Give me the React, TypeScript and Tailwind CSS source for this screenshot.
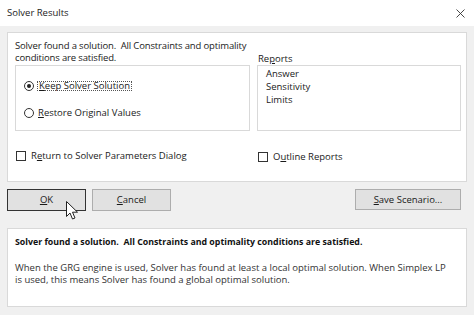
import React from "react";

const font = { fontFamily: '"Open Sans", "Noto Sans", sans-serif' };

function Radio({ checked }: { checked?: boolean }) {
  return (
    <span className="w-[10px] h-[10px] rounded-full border border-[#333] bg-white flex items-center justify-center shrink-0">
      {checked && <span className="w-[4px] h-[4px] rounded-full bg-[#222]" />}
    </span>
  );
}

function Check() {
  return <span className="w-[10px] h-[10px] border border-[#333] bg-white shrink-0" />;
}

export default function App() {
  return (
    <div
      className="w-[474px] h-[315px] bg-[#f0f0f0] overflow-hidden text-[9.5px] leading-[12px] text-[#1a1a1a] relative"
      style={font}
    >
      {/* Title bar */}
      <div className="h-[26px] bg-white flex items-center justify-between pl-[7px] pr-[8px]">
        <span className="text-[9.5px] text-[#222]">Solver Results</span>
        <svg width="9" height="9" viewBox="0 0 9 9" className="mr-[1px]">
          <path d="M0.5 0.5 L8.5 8.5 M8.5 0.5 L0.5 8.5" stroke="#333" strokeWidth="0.9" />
        </svg>
      </div>

      <div className="px-[7px] pt-[6px]">
        {/* Top panel */}
        <div className="h-[150px] bg-white border border-[#d9d9d9] pl-[7px] pr-[5px] pt-[7px]">
          <div className="flex gap-[7px]">
            <div className="w-[235px]">
              <div className="leading-[12px] whitespace-nowrap tracking-[-0.15px]">
                Solver found a solution.&nbsp; All Constraints and optimality
                <br />
                conditions are satisfied.
              </div>
              <div className="mt-[1px] h-[66px] border border-[#d9d9d9] pl-[8px] pt-[15px]">
                <div className="flex items-center gap-[3px] h-[9px]">
                  <Radio checked />
                  <span className="border border-dotted border-[#555] px-[1px] leading-[9px] h-[10px] flex items-center">
                    <u>K</u>eep Solver Solution
                  </span>
                </div>
                <div className="flex items-center gap-[4px] h-[9px] mt-[18px]">
                  <Radio />
                  <span>
                    <u>R</u>estore Original Values
                  </span>
                </div>
              </div>
              <div className="flex items-center gap-[5px] mt-[19px] pl-[1px]">
                <Check />
                <span>
                  R<u>e</u>turn to Solver Parameters Dialog
                </span>
              </div>
            </div>
            <div className="flex-1">
              <div className="pt-[13px] pl-[1px] leading-[12px]">
                Re<u>p</u>orts
              </div>
              <div className="h-[66px] border border-[#d9d9d9] pl-[8px] pt-[1px] leading-[13px]">
                <div>Answer</div>
                <div>Sensitivity</div>
                <div>Limits</div>
              </div>
              <div className="flex items-center gap-[5px] mt-[20px] pl-[1px]">
                <Check />
                <span>
                  O<u>u</u>tline Reports
                </span>
              </div>
            </div>
          </div>
        </div>

        {/* Buttons */}
        <div className="flex mt-[7px] h-[22px]">
          <div className="w-[79px] h-[22px] border-[1.5px] border-[#333] bg-[#e1e1e1] flex items-center justify-center">
            <span>
              <u>O</u>K
            </span>
          </div>
          <div className="ml-[6px] w-[79px] h-[22px] border border-[#adadad] bg-[#e1e1e1] flex items-center justify-center">
            <span>
              <u>C</u>ancel
            </span>
          </div>
          <div className="ml-auto mr-[6px] w-[106px] h-[21px] border border-[#adadad] bg-[#e1e1e1] flex items-center justify-center">
            <span>
              <u>S</u>ave Scenario...
            </span>
          </div>
        </div>

        {/* Bottom panel */}
        <div className="mt-[17px] h-[79px] bg-white border border-[#d9d9d9] pl-[7px] pr-[5px] pt-[7px]">
          <div className="font-bold text-[#111] text-[8.8px] whitespace-nowrap">
            Solver found a solution.&nbsp; All Constraints and optimality conditions are satisfied.
          </div>
          <div className="mt-[14px] text-[#333] leading-[12px] whitespace-nowrap">
            When the GRG engine is used, Solver has found at least a local optimal solution. When Simplex LP
            <br />
            is used, this means Solver has found a global optimal solution.
          </div>
        </div>
      </div>

      {/* mouse cursor */}
      <svg
        className="absolute left-[66px] top-[201px]"
        width="13"
        height="20"
        viewBox="0 0 13 20"
      >
        <path
          d="M0.5 0.5 L0.5 15.5 L4 12 L6.5 18 L9 17 L6.5 11.2 L11.5 11.2 Z"
          fill="white"
          stroke="#222"
          strokeWidth="1"
          strokeLinejoin="round"
        />
      </svg>
    </div>
  );
}
